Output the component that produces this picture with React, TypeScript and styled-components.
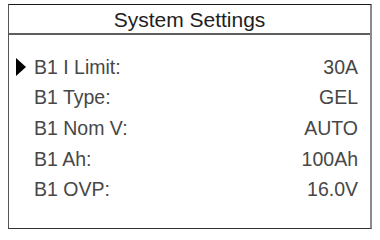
import styled, { createGlobalStyle } from "styled-components";

const GlobalStyle = createGlobalStyle`
  html, body {
    margin: 0;
    padding: 0;
    background: #ffffff;
  }
  body {
    font-family: "Liberation Sans", Arial, sans-serif;
  }
`;

type Setting = {
	label: string;
	value: string;
};

const settings: Setting[] = [
	{ label: "B1 I Limit:", value: "30A" },
	{ label: "B1 Type:", value: "GEL" },
	{ label: "B1 Nom V:", value: "AUTO" },
	{ label: "B1 Ah:", value: "100Ah" },
	{ label: "B1 OVP:", value: "16.0V" },
];

const Screen = styled.div`
  box-sizing: border-box;
  width: 364px;
  height: 225px;
  margin: 4px 0 0 8px;
  border-top: 1.5px solid #1a1a1a;
  border-left: 1.5px solid #555;
  border-right: 2px solid #8a8a8a;
  border-bottom: 1.5px solid #333;
  display: flex;
  flex-direction: column;
`;

const Header = styled.div`
  height: 30px;
  border-bottom: 2px solid #5e5e5e;
  display: flex;
  align-items: center;
  justify-content: center;
  font-size: 21px;
  color: #1e1e1e;
  padding-top: 1px;
  box-sizing: border-box;
`;

const List = styled.div`
  display: flex;
  flex-direction: column;
  padding: 17px 12px 0 0;
`;

const Row = styled.div`
  height: 30.6px;
  display: flex;
  align-items: center;
  font-size: 19.5px;
  color: #474747;
`;

const Marker = styled.div`
  width: 25px;
  flex-shrink: 0;
  display: flex;
  align-items: center;
`;

const Arrow = styled.div<{ $visible: boolean }>`
  width: 0;
  height: 0;
  margin-left: 7px;
  border-top: 9.5px solid transparent;
  border-bottom: 9.5px solid transparent;
  border-left: 10px solid #000;
  visibility: ${({ $visible }) => ($visible ? "visible" : "hidden")};
`;

const Label = styled.span`
  flex: 1;
`;

const Value = styled.span`
  text-align: right;
`;

export default function App() {
	const selected = 0;
	return (
		<>
			<GlobalStyle />
			<Screen>
				<Header>System Settings</Header>
				<List>
					{settings.map((s, i) => (
						<Row key={s.label}>
							<Marker>
								<Arrow $visible={i === selected} />
							</Marker>
							<Label>{s.label}</Label>
							<Value>{s.value}</Value>
						</Row>
					))}
				</List>
			</Screen>
		</>
	);
}
